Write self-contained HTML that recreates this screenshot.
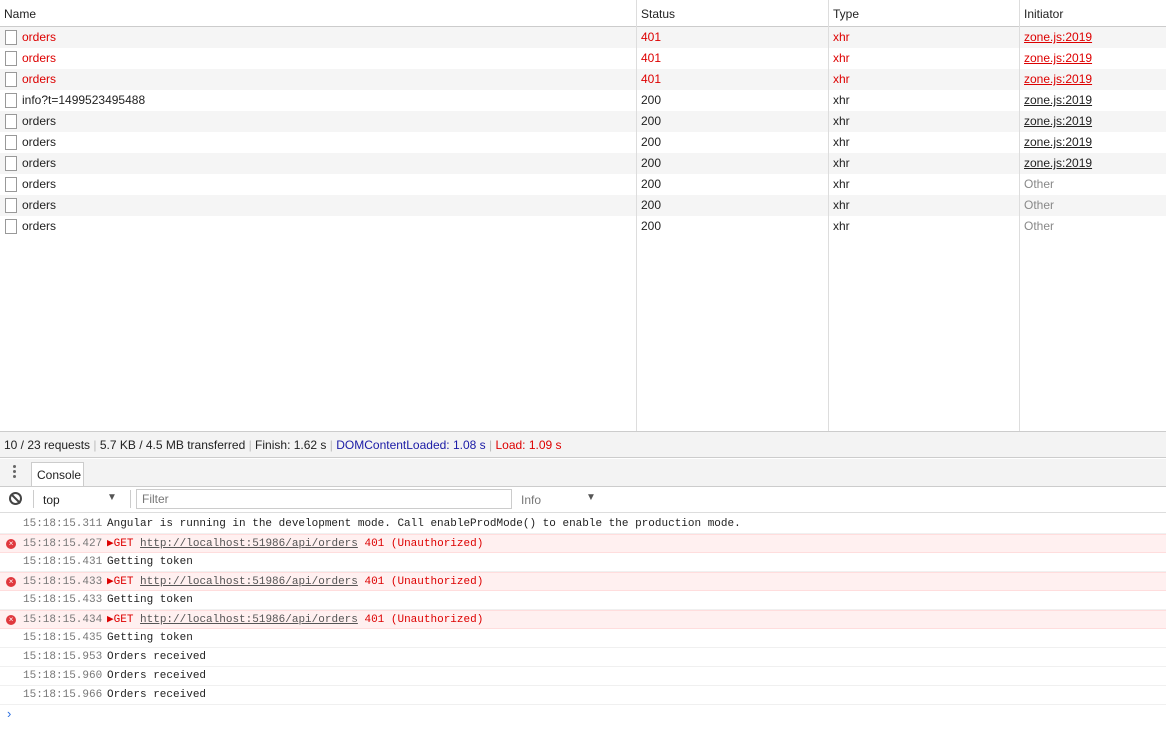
<!DOCTYPE html><html><head><style>
body{margin:0;width:1166px;height:732px;overflow:hidden;background:#fff;font-family:"Liberation Sans",sans-serif;font-size:12px;color:#222;position:relative}
.abs{position:absolute}
.vl{position:absolute;top:0;width:1px;height:432px;background:#ddd}
.row{position:absolute;left:0;width:1166px;height:21px;line-height:21px}
.row span{position:absolute}
.cb{position:absolute;left:5px;top:3px;width:10px;height:13px;border:1px solid #999;background:#fff}
.red{color:#d00}
.u{text-decoration:underline}
.gray{color:#888}
.cl{position:absolute;left:0;width:1166px;height:19px;line-height:19px;font-family:"Liberation Mono",monospace;font-size:11px;border-bottom:1px solid #f0f0f0;box-sizing:border-box}
.cl .t{position:absolute;left:23px;color:#777}
.cl .m{position:absolute;left:107px}
.err{background:#fff0f0;border-top:1px solid #fdd;border-bottom:1px solid #fdd;color:#d00}
.ic{position:absolute;left:6px;top:4px;width:10px;height:10px;border-radius:50%;background:#e0393e;color:#fff;font-size:8px;line-height:10px;text-align:center;font-family:"Liberation Sans"}
</style></head><body>
<div class="abs" style="left:0;top:0;width:1166px;height:26px;border-bottom:1px solid #ccc"></div>
<div class="abs" style="left:4px;top:7px">Name</div>
<div class="abs" style="left:641px;top:7px">Status</div>
<div class="abs" style="left:833px;top:7px">Type</div>
<div class="abs" style="left:1024px;top:7px">Initiator</div>
<div class="row" style="top:27px;background:#f5f5f5"><i class="cb"></i><span class="red" style="left:22px">orders</span><span class="red" style="left:641px">401</span><span class="red" style="left:833px">xhr</span><span class="red u" style="left:1024px">zone.js:2019</span></div>
<div class="row" style="top:48px"><i class="cb"></i><span class="red" style="left:22px">orders</span><span class="red" style="left:641px">401</span><span class="red" style="left:833px">xhr</span><span class="red u" style="left:1024px">zone.js:2019</span></div>
<div class="row" style="top:69px;background:#f5f5f5"><i class="cb"></i><span class="red" style="left:22px">orders</span><span class="red" style="left:641px">401</span><span class="red" style="left:833px">xhr</span><span class="red u" style="left:1024px">zone.js:2019</span></div>
<div class="row" style="top:90px"><i class="cb"></i><span style="left:22px">info?t=1499523495488</span><span style="left:641px">200</span><span style="left:833px">xhr</span><span class="u" style="left:1024px">zone.js:2019</span></div>
<div class="row" style="top:111px;background:#f5f5f5"><i class="cb"></i><span style="left:22px">orders</span><span style="left:641px">200</span><span style="left:833px">xhr</span><span class="u" style="left:1024px">zone.js:2019</span></div>
<div class="row" style="top:132px"><i class="cb"></i><span style="left:22px">orders</span><span style="left:641px">200</span><span style="left:833px">xhr</span><span class="u" style="left:1024px">zone.js:2019</span></div>
<div class="row" style="top:153px;background:#f5f5f5"><i class="cb"></i><span style="left:22px">orders</span><span style="left:641px">200</span><span style="left:833px">xhr</span><span class="u" style="left:1024px">zone.js:2019</span></div>
<div class="row" style="top:174px"><i class="cb"></i><span style="left:22px">orders</span><span style="left:641px">200</span><span style="left:833px">xhr</span><span class="gray" style="left:1024px">Other</span></div>
<div class="row" style="top:195px;background:#f5f5f5"><i class="cb"></i><span style="left:22px">orders</span><span style="left:641px">200</span><span style="left:833px">xhr</span><span class="gray" style="left:1024px">Other</span></div>
<div class="row" style="top:216px"><i class="cb"></i><span style="left:22px">orders</span><span style="left:641px">200</span><span style="left:833px">xhr</span><span class="gray" style="left:1024px">Other</span></div>
<div class="vl" style="left:636px"></div><div class="vl" style="left:828px"></div><div class="vl" style="left:1019px"></div>
<div class="abs" style="left:0;top:431px;width:1166px;height:27px;background:#f3f3f3;border-top:1px solid #ccc;border-bottom:1px solid #ccc;line-height:27px;padding-left:4px;box-sizing:border-box">10 / 23 requests <span style="color:#bbb">|</span> 5.7 KB / 4.5 MB transferred <span style="color:#bbb">|</span> Finish: 1.62 s <span style="color:#bbb">|</span> <span style="color:#1a1aa6">DOMContentLoaded: 1.08 s</span> <span style="color:#bbb">|</span> <span style="color:#d00">Load: 1.09 s</span></div>
<div class="abs" style="left:0;top:459px;width:1166px;height:27px;background:#f3f3f3;border-bottom:1px solid #ccc"></div>
<div class="abs" style="left:13px;top:465px;width:3px;height:3px;background:#666;box-shadow:0 5px #666,0 10px #666;border-radius:50%"></div>
<div class="abs" style="left:31px;top:462px;width:53px;height:24px;background:#fff;border:1px solid #ccc;border-bottom:none;line-height:24px;padding-left:5px;box-sizing:border-box">Console</div>
<div class="abs" style="left:0;top:487px;width:1166px;height:25px;border-bottom:1px solid #ddd"></div>
<div class="abs" style="left:9px;top:492px;width:9px;height:9px;border:2px solid #444;border-radius:50%"><div style="position:absolute;left:4px;top:-1px;width:2px;height:12px;background:#444;transform:rotate(-45deg)"></div></div>
<div class="abs" style="left:33px;top:490px;width:1px;height:18px;background:#ccc"></div>
<div class="abs" style="left:43px;top:493px">top</div>
<div class="abs" style="left:107px;top:492px;font-size:10px;color:#555">▼</div>
<div class="abs" style="left:130px;top:490px;width:1px;height:18px;background:#ccc"></div>
<div class="abs" style="left:136px;top:489px;width:376px;height:20px;border:1px solid #ccc;box-sizing:border-box;line-height:18px;padding-left:5px;color:#777">Filter</div>
<div class="abs" style="left:521px;top:493px;color:#777">Info</div>
<div class="abs" style="left:586px;top:492px;font-size:10px;color:#555">▼</div>
<div class="cl" style="top:515px"><span class="t">15:18:15.311</span><span class="m">Angular is running in the development mode. Call enableProdMode() to enable the production mode.</span></div>
<div class="cl err" style="top:534px"><i class="ic">×</i><span class="t">15:18:15.427</span><span class="m">▶GET <u style="color:#555">http://localhost:51986/api/orders</u> 401 (Unauthorized)</span></div>
<div class="cl" style="top:553px"><span class="t">15:18:15.431</span><span class="m">Getting token</span></div>
<div class="cl err" style="top:572px"><i class="ic">×</i><span class="t">15:18:15.433</span><span class="m">▶GET <u style="color:#555">http://localhost:51986/api/orders</u> 401 (Unauthorized)</span></div>
<div class="cl" style="top:591px"><span class="t">15:18:15.433</span><span class="m">Getting token</span></div>
<div class="cl err" style="top:610px"><i class="ic">×</i><span class="t">15:18:15.434</span><span class="m">▶GET <u style="color:#555">http://localhost:51986/api/orders</u> 401 (Unauthorized)</span></div>
<div class="cl" style="top:629px"><span class="t">15:18:15.435</span><span class="m">Getting token</span></div>
<div class="cl" style="top:648px"><span class="t">15:18:15.953</span><span class="m">Orders received</span></div>
<div class="cl" style="top:667px"><span class="t">15:18:15.960</span><span class="m">Orders received</span></div>
<div class="cl" style="top:686px"><span class="t">15:18:15.966</span><span class="m">Orders received</span></div>
<div class="abs" style="left:7px;top:706px;color:#2a6ee0;font-size:13px">›</div>
</body></html>
